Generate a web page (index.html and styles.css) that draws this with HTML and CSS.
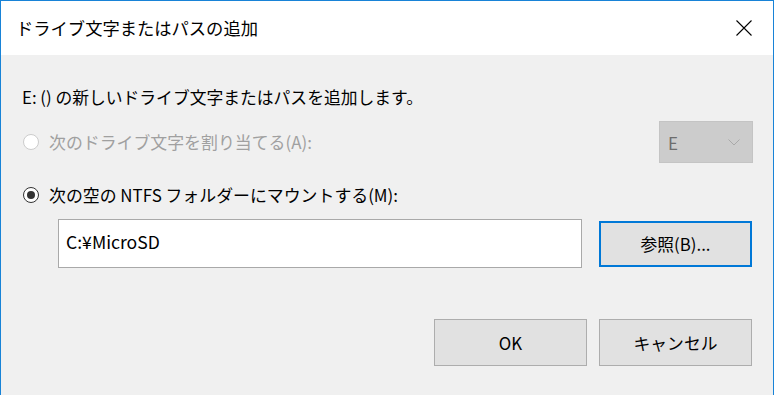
FILE: index.html
```html
<!DOCTYPE html>
<html lang="ja">
<head>
<meta charset="utf-8">
<title>ドライブ文字またはパスの追加</title>
<link rel="stylesheet" href="styles.css">
</head>
<body>
<div class="window">
  <div class="titlebar">
    <span class="title">ドライブ文字またはパスの追加</span>
    <span class="close">
      <svg width="16" height="16" viewBox="0 0 16 16"><path d="M0.5 0.5 L15.5 15.5 M15.5 0.5 L0.5 15.5" stroke="#000" stroke-width="1.1" fill="none"/></svg>
    </span>
  </div>
  <div class="content">
    <div class="intro">E: () の新しいドライブ文字またはパスを追加します。</div>
    <div class="row row-assign">
      <label class="option disabled"><span class="radio"></span><span>次のドライブ文字を割り当てる(A):</span></label>
      <div class="select">
        <span>E</span>
        <svg width="12" height="7" viewBox="0 0 12 7"><path d="M0.5 0.5 L6 6 L11.5 0.5" stroke="#a9a9a9" stroke-width="1" fill="none"/></svg>
      </div>
    </div>
    <div class="row row-mount">
      <label class="option"><span class="radio checked"></span><span>次の空の NTFS フォルダーにマウントする(M):</span></label>
    </div>
    <div class="row row-path">
      <div class="textbox">C:¥MicroSD</div>
      <button class="btn btn-focus">参照(B)...</button>
    </div>
    <div class="row row-actions">
      <button class="btn">OK</button>
      <button class="btn">キャンセル</button>
    </div>
  </div>
</div>
</body>
</html>
```

FILE: styles.css
```css
html, body {
  margin: 0;
  padding: 0;
  background: #f0f0f0;
}
body {
  font-family: "Noto Sans CJK JP", "Noto Sans", sans-serif;
  color: #000;
}
.window {
  width: 774px;
  height: 395px;
  box-sizing: border-box;
  border: 1px solid #1883d7;
  border-bottom: none;
  background: #f0f0f0;
  overflow: hidden;
}
.titlebar {
  height: 54px;
  background: #fff;
  display: flex;
  align-items: center;
  justify-content: space-between;
  padding: 0 21px 0 15px;
}
.title {
  font-size: 17.3px;
  line-height: 24px;
}
.close {
  display: flex;
  width: 16px;
  height: 16px;
}
.content {
  padding: 30px 20px 0 21px;
  display: flex;
  flex-direction: column;
}
.intro {
  font-size: 16.8px;
  line-height: 24px;
  height: 24px;
}
.row {
  display: flex;
  align-items: center;
}
.row-assign {
  margin-top: 12px;
  height: 42px;
  justify-content: space-between;
}
.row-mount {
  margin-top: 20px;
  height: 24px;
}
.option {
  display: flex;
  align-items: center;
  font-size: 16.9px;
  line-height: 24px;
}
.option.disabled {
  color: #a0a0a0;
}
.radio {
  width: 14px;
  height: 14px;
  border: 1px solid #333;
  border-radius: 50%;
  background: #fff;
  margin-left: 1px;
  margin-right: 10px;
  display: flex;
  align-items: center;
  justify-content: center;
}
.disabled .radio {
  border-color: #cccccc;
}
.radio.checked::after {
  content: "";
  width: 8px;
  height: 8px;
  border-radius: 50%;
  background: #333;
}
.select {
  width: 94px;
  height: 42px;
  box-sizing: border-box;
  background: #cccccc;
  border: 1px solid #c4c4c4;
  display: flex;
  align-items: center;
  justify-content: space-between;
  padding: 0 12px 0 8px;
  font-size: 17px;
  color: #6d6d6d;
}
.row-path {
  margin-top: 12px;
  padding-left: 36px;
  height: 49px;
  gap: 17px;
  align-items: center;
}
.textbox {
  width: 524px;
  height: 49px;
  box-sizing: border-box;
  background: #fff;
  border: 1px solid #a9a9a9;
  font-size: 17.6px;
  line-height: 44px;
  padding: 0 7px;
}
.btn {
  width: 153px;
  height: 47px;
  box-sizing: border-box;
  background: #e1e1e1;
  border: 1px solid #adadad;
  font-family: inherit;
  font-size: 16.8px;
  color: #000;
  padding: 0;
  margin: 0;
}
.btn-focus {
  height: 46px;
  border: 2px solid #0078d7;
}
.row-actions {
  margin-top: 51px;
  justify-content: flex-end;
  gap: 12px;
  padding-right: 1px;
}
```
